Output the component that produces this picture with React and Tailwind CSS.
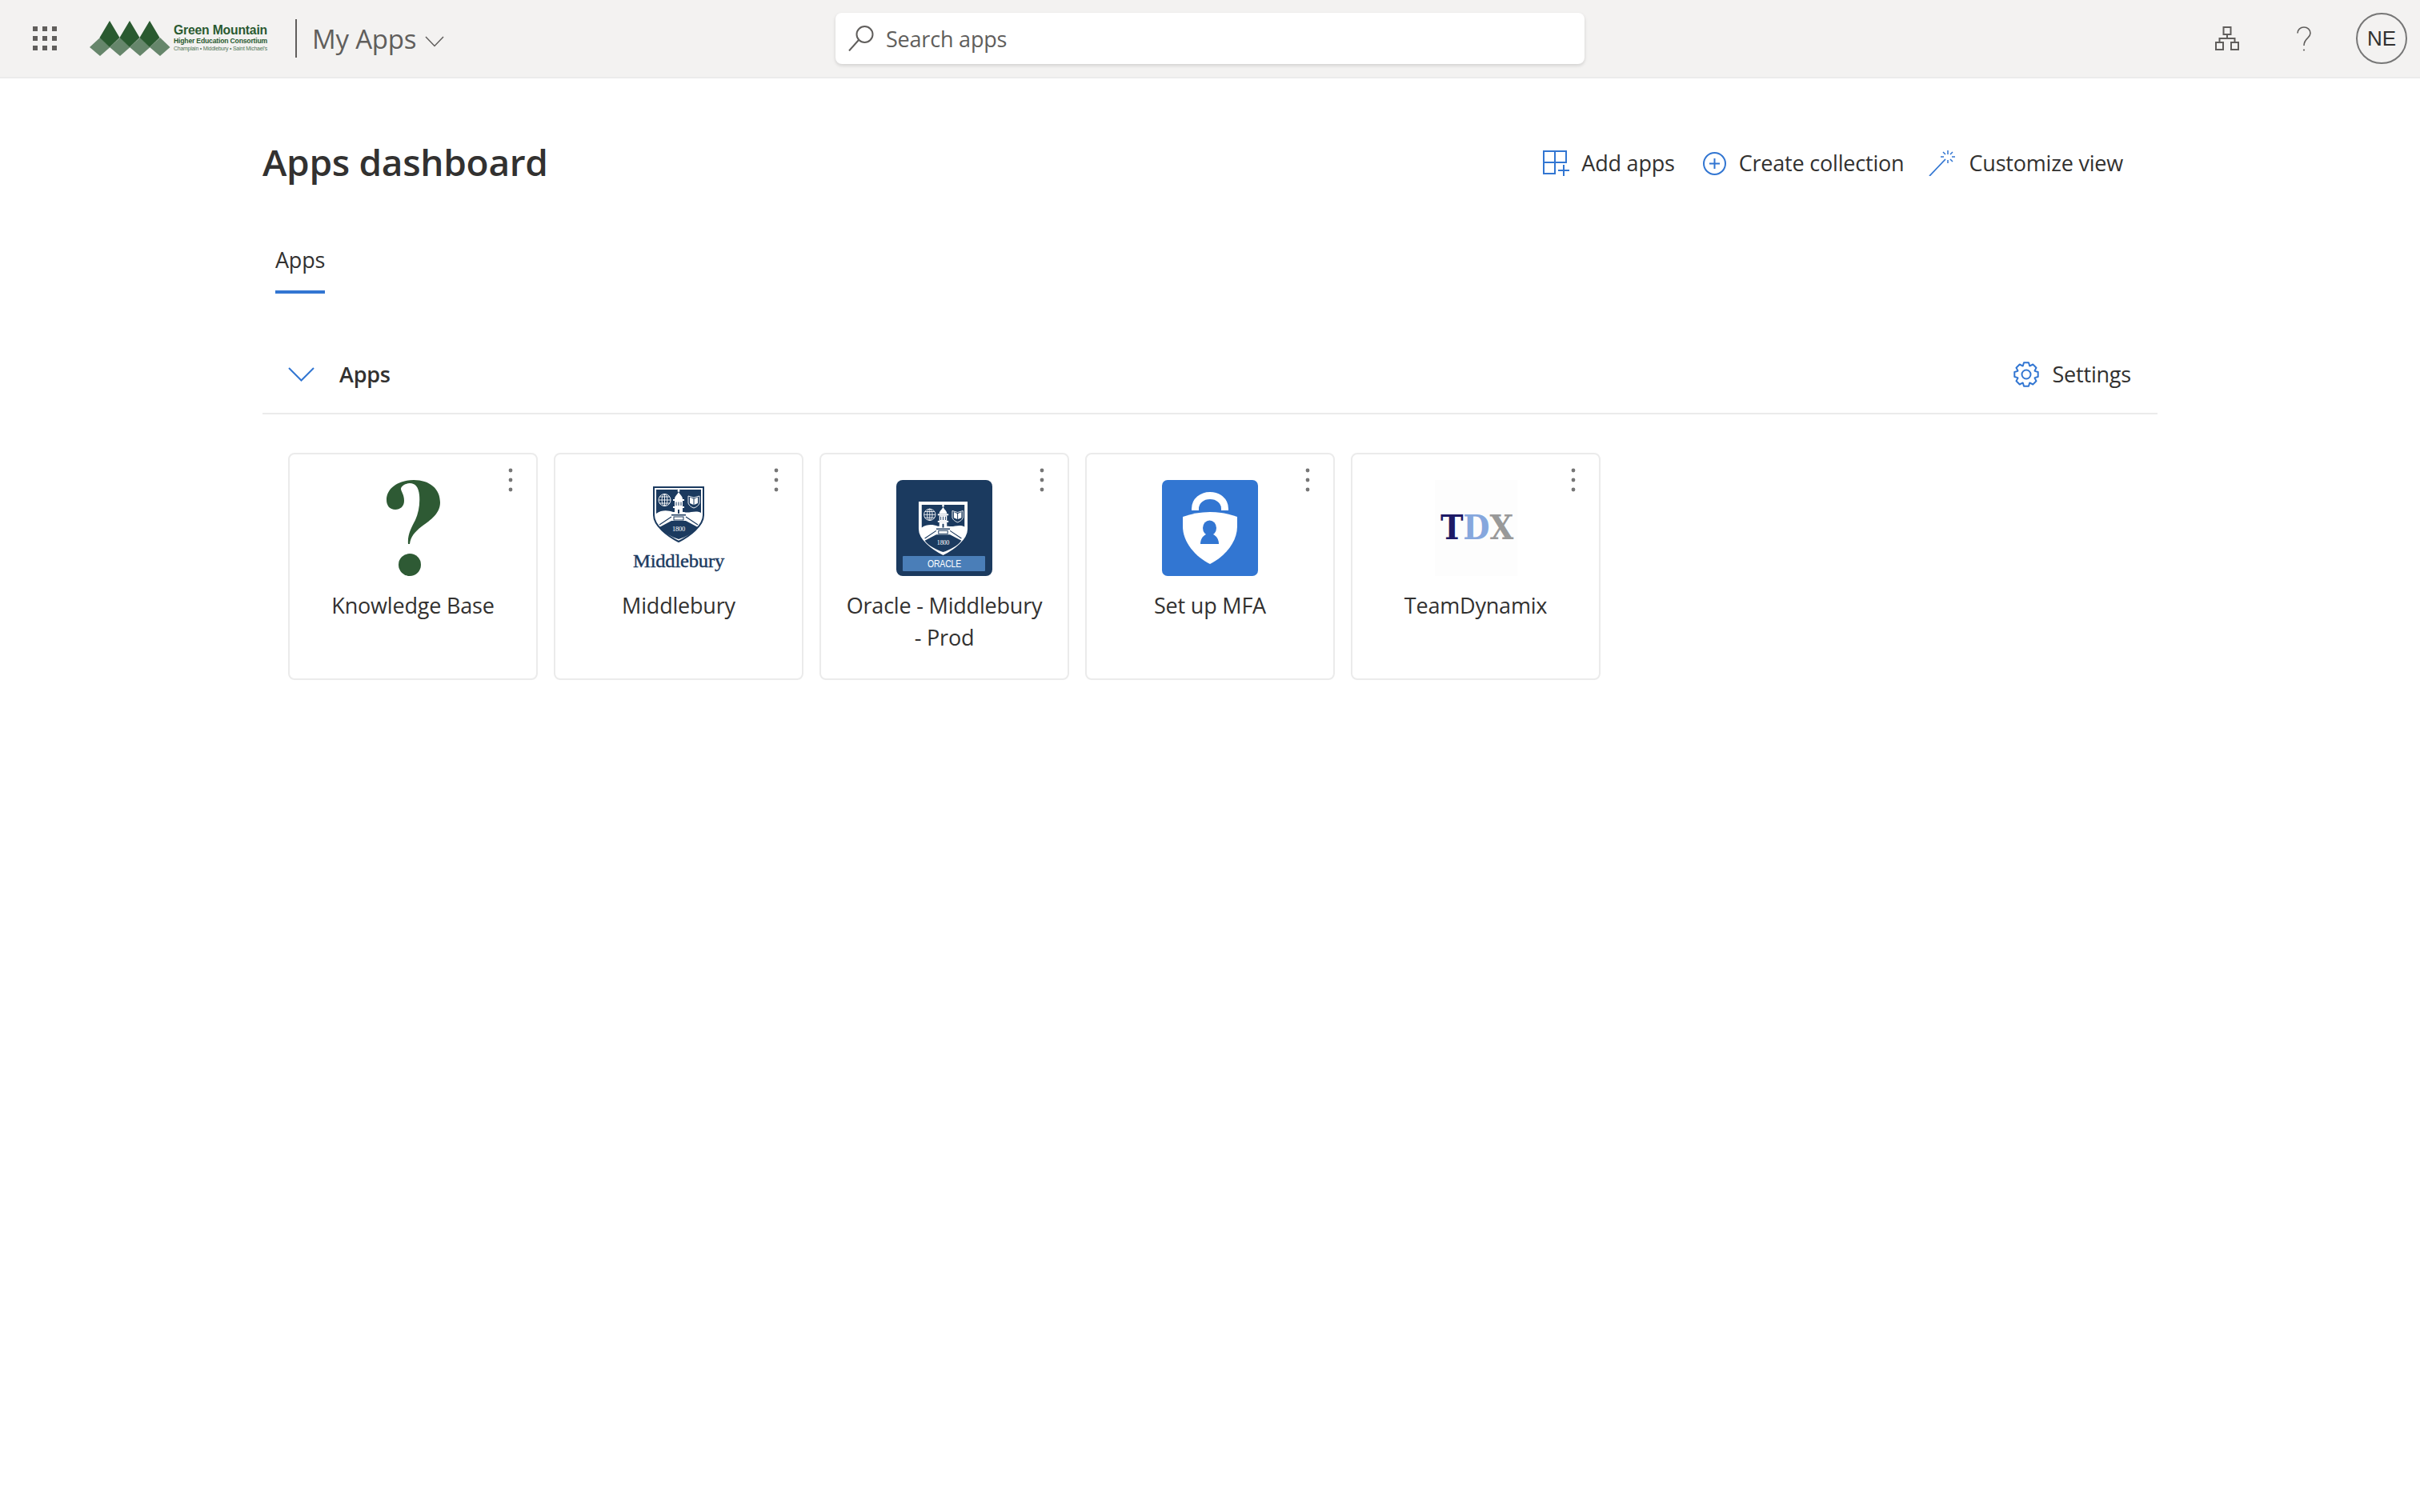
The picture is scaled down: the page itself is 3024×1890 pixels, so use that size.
const apps = [
  { name: 'Knowledge Base', icon: <QuestionIcon /> },
  { name: 'Middlebury', icon: <MiddleburyLogo /> },
  { name: 'Oracle - Middlebury - Prod', icon: <OracleTile /> },
  { name: 'Set up MFA', icon: <MfaTile /> },
  { name: 'TeamDynamix', icon: <TdxTile /> },
];

const gearPath = (() => {
  const pts = [];
  for (let i = 0; i < 8; i++) {
    const a = (i * Math.PI) / 4;
    const w = 0.2;
    [[a - 0.37, 11.5], [a - w, 15], [a + w, 15], [a + 0.37, 11.5]].forEach(([t, r]) => {
      pts.push(`${(16 + r * Math.cos(t)).toFixed(2)} ${(16 + r * Math.sin(t)).toFixed(2)}`);
    });
  }
  return `M${pts.join('L')}Z`;
})();

function QuestionIcon() {
  return (
    <svg width="67" height="120" viewBox="0 0 67 120">
      <path
        fill="#2e5a34"
        d="M0 25C0 10 15 0 34 0C54 0 67 11 67 28C67 42 55 50 44 58C35 65 30 71 29 80H27C26 68 31 60 36 50C40 41 42 30 41 19C40 9 36 4 29 4C23 4 18 8 18 11C18 14 22 18 22 26C22 33 17 37 11 37C4 37 0 32 0 25Z"
      />
      <ellipse cx="29" cy="106" rx="14" ry="14" fill="#2e5a34" />
    </svg>
  );
}

function Crest({ border, ink = '#1b3a5f', paper = '#ffffff' }) {
  return (
    <>
      <path d="M2 2H64V37C64 50 47 63 33 70C19 63 2 50 2 37Z" fill={paper} stroke={border} strokeWidth="2" />
      <path d="M5 5H61V34C54 30 46 35 40 33H26C20 31 12 30 5 35Z" fill={ink} />
      <path d="M24 44H42L57 52C52 59 42 64 33 67C24 64 14 59 9 52Z" fill={ink} />
      <path d="M24 39L9 49M42 39L57 49" stroke={ink} strokeWidth="1.2" />
      {/* globe */}
      <g fill="none" stroke={paper} strokeWidth="0.9">
        <circle cx="15.5" cy="18" r="7.5" />
        <ellipse cx="15.5" cy="18" rx="3.4" ry="7.5" />
        <path d="M15.5 10.5V25.5M8 18H23M9 14H22M9 22H22" />
        <path d="M45 13L52 15L59 13V22C58 25 55 27 52 28C49 27 46 25 45 22Z" />
      </g>
      <path d="M47 14.5L51.5 16.5V24L47 22ZM57 14.5L52.5 16.5V24L57 22Z" fill={paper} />
      {/* tower */}
      <circle cx="33" cy="6.5" r="1.4" fill={paper} />
      <path d="M28 17C28 13 31 12 33 8C35 12 38 13 38 17Z" fill={paper} />
      <rect x="26" y="17" width="14" height="2" fill={paper} />
      <rect x="28" y="19" width="10" height="7" fill={paper} />
      <path d="M30 20.5V25M33 20.5V25M36 20.5V25" stroke={ink} strokeWidth="1" />
      <rect x="26" y="26" width="14" height="2" fill={paper} />
      <rect x="28" y="28" width="10" height="8" fill={paper} />
      <rect x="32" y="30" width="2" height="5" fill={ink} />
      <rect x="24" y="36" width="18" height="1.5" fill={ink} />
      <rect x="27" y="39" width="12" height="4" fill="none" stroke={ink} strokeWidth="1" />
      <text x="33" y="57" textAnchor="middle" fontSize="8.5" fill={paper} fontFamily="'Liberation Serif', serif">1800</text>
    </>
  );
}

function MiddleburyLogo() {
  return (
    <svg width="120" height="120" viewBox="0 0 120 120">
      <svg x="27" y="7" width="66" height="72" viewBox="0 0 66 72">
        <Crest border="#1b3a5f" />
      </svg>
      <text x="60" y="109" textAnchor="middle" textLength="114" lengthAdjust="spacingAndGlyphs" fontSize="24" stroke="#1b3a5f" strokeWidth="0.4" fill="#1b3a5f" fontFamily="'Liberation Serif', serif">Middlebury</text>
    </svg>
  );
}

function OracleTile() {
  return (
    <svg width="120" height="120" viewBox="0 0 120 120">
      <rect width="120" height="120" rx="8" fill="#1b3a5f" />
      <svg x="27" y="26" width="63" height="69" viewBox="0 0 66 72">
        <Crest border="#ffffff" />
      </svg>
      <rect x="8" y="95" width="103" height="19" rx="1" fill="#4a7eb8" />
      <text x="60" y="109" textAnchor="middle" fontSize="13" fill="#ffffff" fontFamily="'Liberation Sans', sans-serif" textLength="42" lengthAdjust="spacingAndGlyphs">ORACLE</text>
    </svg>
  );
}

function MfaTile() {
  return (
    <svg width="120" height="120" viewBox="0 0 120 120">
      <rect width="120" height="120" rx="7" fill="#3276d2" />
      <path d="M41.5 38V36C41.5 26 50 19.5 60 19.5C70 19.5 78.5 26 78.5 36V38" fill="none" stroke="#ffffff" strokeWidth="9" />
      <path d="M26 46C37 42 48 40 60 40C72 40 83 42 94 46V58C94 78 78 96 60 105C42 96 26 78 26 58Z" fill="#ffffff" />
      <ellipse cx="59.5" cy="60" rx="8.5" ry="9.5" fill="#3276d2" />
      <path d="M48 80C48 74 51 70 55 68H64C68 70 71 74 71 80Z" fill="#3276d2" />
    </svg>
  );
}

function TdxTile() {
  return (
    <div className="flex h-[120px] w-[103px] items-center justify-center bg-[#fdfdfd]">
      <svg width="103" height="120" viewBox="0 0 103 120">
        <text x="7" y="74" textLength="91" lengthAdjust="spacingAndGlyphs" fontSize="43" fontWeight="700" fontFamily="'DejaVu Serif', serif">
          <tspan fill="#1d1a66">T</tspan>
          <tspan fill="#86a7dd">D</tspan>
          <tspan fill="#999999">X</tspan>
        </text>
      </svg>
    </div>
  );
}

function ConsortiumLogo() {
  const dark = [25, 50, 75];
  const light = [13, 38, 63, 88];
  return (
    <svg width="240" height="48" viewBox="0 0 240 48">
      {light.map((x) => (
        <path key={x} d={`M${x} 21L${x + 12.5} 33L${x} 44L${x - 13} 33Z`} fill="#66866b" />
      ))}
      {dark.map((x) => (
        <path key={x} d={`M${x} 0L${x + 12.5} 21L${x} 33L${x - 12.5} 21Z`} fill="#2a5a30" />
      ))}
      <g fontFamily="'Liberation Sans', sans-serif" fill="#2a5a30">
        <text x="105" y="17" fontSize="16.5" fontWeight="700" textLength="117" lengthAdjust="spacingAndGlyphs">Green Mountain</text>
        <text x="105" y="28" fontSize="9.5" fontWeight="700" textLength="117" lengthAdjust="spacingAndGlyphs">Higher Education Consortium</text>
        <text x="105" y="37" fontSize="7" fill="#4f7556" textLength="117" lengthAdjust="spacingAndGlyphs">Champlain • Middlebury • Saint Michael's</text>
      </g>
    </svg>
  );
}

function Card({ name, icon }) {
  return (
    <div className="relative h-[284px] w-[312px] rounded-lg border-2 border-[#ebebeb] bg-white pt-[32px]">
      <svg className="absolute right-[29px] top-[16px]" width="6" height="32" viewBox="0 0 6 32">
        <circle cx="3" cy="4" r="2.4" fill="#767676" />
        <circle cx="3" cy="16" r="2.4" fill="#767676" />
        <circle cx="3" cy="28" r="2.4" fill="#767676" />
      </svg>
      <div className="flex h-[120px] justify-center">{icon}</div>
      <div className="mt-[17px] px-[26px] text-center text-[27px] leading-[40px] text-[#323130]">{name}</div>
    </div>
  );
}

export default function App() {
  return (
    <div className="min-h-screen bg-white font-['Open_Sans',sans-serif] tracking-[-0.2px] text-[#323130]">
      <header className="flex h-[98px] items-center border-b-2 border-[#ebebeb] bg-[#f3f2f1]">
        <div className="flex w-[1044px] items-center">
          <svg className="ml-[41px]" width="30" height="30" viewBox="0 0 30 30" fill="#605e5c">
            {[0, 12, 24].map((y) => [0, 12, 24].map((x) => <rect key={`${x}${y}`} x={x} y={y} width="6" height="6" />))}
          </svg>
          <div className="ml-[41px] mt-[3px]">
            <ConsortiumLogo />
          </div>
          <div className="ml-[17px] h-[48px] w-[2px] bg-[#605e5c]" />
          <span className="ml-[19px] mt-[2px] text-[33px] text-[#605e5c]">My Apps</span>
          <svg className="ml-[11px] mt-[8px]" width="24" height="14" viewBox="0 0 24 14" fill="none" stroke="#605e5c" strokeWidth="1.5">
            <path d="M1 1L12 12.5L23 1" />
          </svg>
        </div>
        <div className="flex h-[64px] w-[936px] items-center rounded-lg bg-white pl-[16px] shadow-[0_2px_4px_rgba(0,0,0,0.14)]">
          <svg width="32" height="32" viewBox="0 0 32 32" fill="none" stroke="#605e5c" strokeWidth="2">
            <circle cx="20.5" cy="11" r="10" />
            <path d="M13 18L1 31.5" />
          </svg>
          <span className="ml-[15px] mt-[2px] text-[27px] text-[#605e5c]">Search apps</span>
        </div>
        <div className="flex flex-1 items-center justify-end pr-[16px]">
          <svg width="30" height="30" viewBox="0 0 30 30" fill="none" stroke="#605e5c" strokeWidth="2">
            <rect x="10.5" y="1" width="9" height="9" />
            <rect x="1" y="20" width="9" height="9" />
            <rect x="20" y="20" width="9" height="9" />
            <path d="M15 10V15M5.5 20V15H24.5V20" />
          </svg>
          <svg className="ml-[72px]" width="18" height="31" viewBox="0 0 18 31" fill="none" stroke="#605e5c" strokeWidth="1.6">
            <path d="M1 8.5C1 4 4.5 1 9 1C13.5 1 17 4 17 8.5C17 15 9 14.5 9 24" />
            <circle cx="9" cy="29.5" r="1.1" fill="#605e5c" stroke="none" />
          </svg>
          <div className="ml-[56px] flex h-[64px] w-[64px] items-center justify-center rounded-full border-2 border-[#767676] font-['Liberation_Sans',sans-serif] text-[26px] tracking-normal text-[#323130]">
            NE
          </div>
        </div>
      </header>

      <main className="mx-auto w-[2368px]">
        <div className="mt-[78px] flex h-[52px] items-center justify-between pr-[43px]">
          <h1 className="text-[46px] font-semibold leading-[52px] tracking-[-0.3px]">Apps dashboard</h1>
          <div className="mt-[4px] flex items-center text-[27px]">
            <svg width="34" height="32" viewBox="0 0 34 32" fill="none" stroke="#3276d2" strokeWidth="2">
              <path d="M1 1H29V15H15V29H1ZM15 1V15M1 15H15" />
              <path d="M26 18V32M19 25H33" />
            </svg>
            <span className="ml-[14px]">Add apps</span>
            <svg className="ml-[35px]" width="29" height="29" viewBox="0 0 29 29" fill="none" stroke="#3276d2" strokeWidth="2">
              <circle cx="14.5" cy="14.5" r="13.5" />
              <path d="M14.5 8V21M8 14.5H21" />
            </svg>
            <span className="ml-[16px]">Create collection</span>
            <svg className="ml-[31px]" width="34" height="32" viewBox="0 0 34 32" fill="none" stroke="#3276d2" strokeWidth="1.8">
              <path d="M1 32L21 11" />
              <path d="M24 0V5M24 12V16M15 8H19M29 8H33M18 2L21 5M30 2L27 5M27 11L30 14" strokeWidth="1.5" />
            </svg>
            <span className="ml-[16px]">Customize view</span>
          </div>
        </div>

        <div className="ml-[16px] mt-[77px] inline-flex flex-col">
          <span className="text-[27px] leading-[40px]">Apps</span>
          <div className="mt-[18px] h-[4px] bg-[#3276d2]" />
        </div>

        <div className="mt-[81px] flex items-center justify-between border-b-2 border-[#ebebeb] pb-[28px] pr-[33px]">
          <div className="flex h-[40px] items-center pl-[32px]">
            <svg width="33" height="18" viewBox="0 0 33 18" fill="none" stroke="#3276d2" strokeWidth="2">
              <path d="M1 1L16.5 16.5L32 1" />
            </svg>
            <span className="ml-[31px] text-[27px] font-semibold">Apps</span>
          </div>
          <div className="flex h-[40px] items-center text-[27px]">
            <svg width="32" height="32" viewBox="0 0 32 32" fill="none" stroke="#3276d2" strokeWidth="2">
              <path d={gearPath} strokeLinejoin="round" />
              <circle cx="16" cy="16" r="5.5" />
            </svg>
            <span className="ml-[16px]">Settings</span>
          </div>
        </div>

        <div className="mt-[48px] flex gap-[20px] pl-[32px]">
          {apps.map((app) => (
            <Card key={app.name} name={app.name} icon={app.icon} />
          ))}
        </div>
      </main>
    </div>
  );
}
